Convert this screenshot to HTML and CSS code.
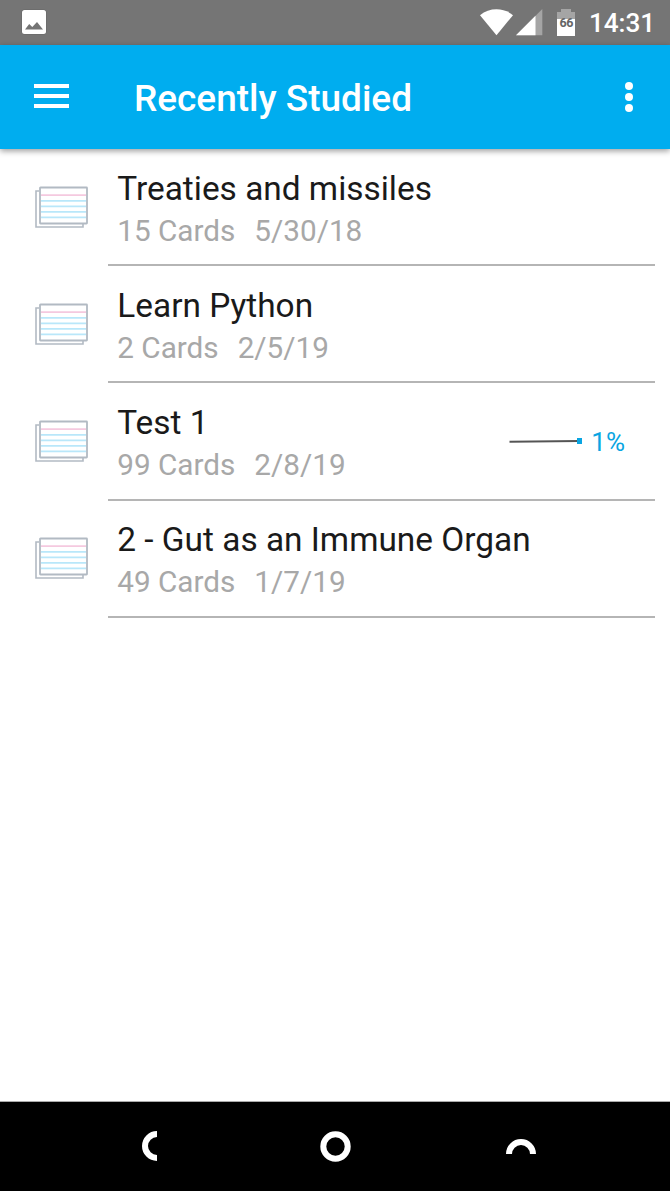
FILE: index.html
```html
<!DOCTYPE html>
<html lang="en">
<head>
<meta charset="utf-8">
<title>Recently Studied</title>
<link rel="stylesheet" href="styles.css">
</head>
<body>
<svg class="symbols" width="0" height="0" aria-hidden="true">
  <symbol id="deck" viewBox="0 0 54 43">
    <path d="M4 5H1V41H48V38" fill="#fff" stroke="#b2bac3" stroke-width="1.6"/>
    <rect x="5" y="1.5" width="47" height="36" rx="0.5" fill="#fff" stroke="#b2bac3" stroke-width="1.8"/>
    <path d="M6 9.2H51" stroke="#f5c9df" stroke-width="1.7"/>
    <path d="M6 14.8H51M6 20.3H51M6 25.8H51M6 31.3H51" stroke="#b9e7fa" stroke-width="1.7"/>
  </symbol>
</svg>
<div class="screen">
  <div class="status">
    <svg class="photo" width="26" height="26" viewBox="0 0 26 26"><rect x="0.5" y="0.5" width="25" height="25" rx="3" fill="#666"/><rect x="1" y="1" width="24" height="24" rx="2.5" fill="#fff"/><path d="M4 20.5L8.2 15L11.3 18L16 13L22 20.5Z" fill="#747474"/></svg>
    <div class="signals">
      <svg class="wifi" width="34" height="28" viewBox="0 0 34 28"><path d="M0 7.2C9.5-.7 23.5-.7 33 7.2L16.5 27.3Z" fill="#fff"/></svg>
      <svg class="cell" width="27" height="27" viewBox="0 0 27 27"><path d="M0 26.3L26.3 0V26.3Z" fill="#a5a5a5"/><path d="M0 26.3L19.5 6.8V26.3Z" fill="#fff"/></svg>
      <div class="battery">
        <svg width="18" height="28" viewBox="0 0 18 28"><path d="M0 4H4V1H14V4H18V28H0Z" fill="#a5a5a5"/><path d="M0 11H18V28H0Z" fill="#fff"/></svg>
        <span class="level">66</span>
      </div>
      <span class="clock">14:31</span>
    </div>
  </div>
  <header class="appbar">
    <svg class="menu" width="35" height="24" viewBox="0 0 35 24"><path d="M0 2H35M0 12H35M0 22H35" stroke="#fff" stroke-width="4"/></svg>
    <h1 class="heading">Recently Studied</h1>
    <svg class="more" width="8" height="32" viewBox="0 0 8 32"><g fill="#fff"><circle cx="4" cy="5" r="4"/><circle cx="4" cy="16" r="4"/><circle cx="4" cy="27" r="4"/></g></svg>
  </header>
  <main class="list">
    <div class="row">
      <svg class="deck" width="54" height="43"><use href="#deck"/></svg>
      <div class="body"><div class="texts"><div class="title">Treaties and missiles</div><div class="meta"><span>15 Cards</span><span>5/30/18</span></div></div></div>
    </div>
    <div class="row">
      <svg class="deck" width="54" height="43"><use href="#deck"/></svg>
      <div class="body"><div class="texts"><div class="title">Learn Python</div><div class="meta"><span>2 Cards</span><span>2/5/19</span></div></div></div>
    </div>
    <div class="row">
      <svg class="deck" width="54" height="43"><use href="#deck"/></svg>
      <div class="body"><div class="texts"><div class="title">Test 1</div><div class="meta"><span>99 Cards</span><span>2/8/19</span></div></div>
        <div class="progress"><svg width="73" height="10" viewBox="0 0 73 10"><path d="M0.5 4.7L70 4" stroke="#555" stroke-width="1.9"/><rect x="68" y="1" width="5" height="6" fill="#09a5e2"/></svg><span class="percent">1%</span></div>
      </div>
    </div>
    <div class="row">
      <svg class="deck" width="54" height="43"><use href="#deck"/></svg>
      <div class="body"><div class="texts"><div class="title">2 - Gut as an Immune Organ</div><div class="meta"><span>49 Cards</span><span>1/7/19</span></div></div></div>
    </div>
  </main>
  <nav class="navbar">
    <svg width="30" height="30" viewBox="0 0 30 30"><path d="M15 3A12 12 0 0 0 15 27" fill="none" stroke="#fff" stroke-width="6"/></svg>
    <svg class="home" width="31" height="31" viewBox="0 0 31 31"><circle cx="15.5" cy="15.5" r="12.2" fill="none" stroke="#fff" stroke-width="6"/></svg>
    <svg class="recents" width="30" height="15" viewBox="0 0 30 15"><path d="M3 15A12 12 0 0 1 27 15" fill="none" stroke="#fff" stroke-width="6"/></svg>
  </nav>
</div>
</body>
</html>
```
FILE: styles.css
```css
* { box-sizing: border-box; }
body { margin: 0; background: #fff; font-family: Roboto, "Liberation Sans", sans-serif; }
svg { display: block; flex: none; }
.symbols { position: absolute; }
.screen { display: flex; flex-direction: column; width: 670px; height: 1191px; }

.status { display: flex; justify-content: space-between; height: 44.5px; padding: 0 15px 0 20.5px; background: #757575; color: #fff; }
.photo { margin-top: 9.4px; }
.signals { display: flex; align-items: flex-start; }
.wifi { margin-top: 8px; }
.cell { margin: 9px 0 0 2px; }
.battery { position: relative; margin: 8px 0 0 14.5px; }
.level { position: absolute; left: 0; top: 8px; width: 18px; text-align: center; font-size: 12.5px; line-height: 14px; font-weight: 700; letter-spacing: -0.5px; color: #666; }
.clock { margin-left: 13.8px; font-size: 26.2px; line-height: 47px; font-weight: 500; letter-spacing: -0.1px; }

.appbar { display: flex; align-items: center; height: 104.5px; padding: 0 37px 0 34.4px; background: #00adef; color: #fff; box-shadow: 0 2px 6px rgba(0, 0, 0, 0.4); z-index: 1; }
.menu { margin-top: -1px; }
.heading { flex: 1; margin: 4.5px 0 0 64.5px; font-size: 37px; line-height: 44px; font-weight: 500; }

.list { flex: 1; }
.row { display: flex; align-items: flex-start; height: 117.2px; padding: 0 15px 0 35px; }
.deck { margin-top: 36.5px; }
.body { display: flex; flex: 1; justify-content: space-between; height: 100%; margin-left: 19px; padding: 18.8px 30px 0 9.3px; border-bottom: 2px solid #b5b5b5; }
.title { font-size: 33.4px; line-height: 42px; color: #1a1a1a; white-space: nowrap; }
.meta { display: flex; gap: 19px; font-size: 29.7px; line-height: 42px; color: #a8a8a8; }
.progress { display: flex; align-items: center; gap: 9px; height: 32px; margin-top: 24px; }
.percent { font-size: 26px; line-height: 32px; color: #09a5e2; }

.navbar { display: flex; justify-content: space-between; height: 90px; padding: 29px 134px 0 142px; background: #000; border-top: 1px solid #aaa; }
.home { margin-right: 8px; }
.recents { margin-top: 8px; }
```
